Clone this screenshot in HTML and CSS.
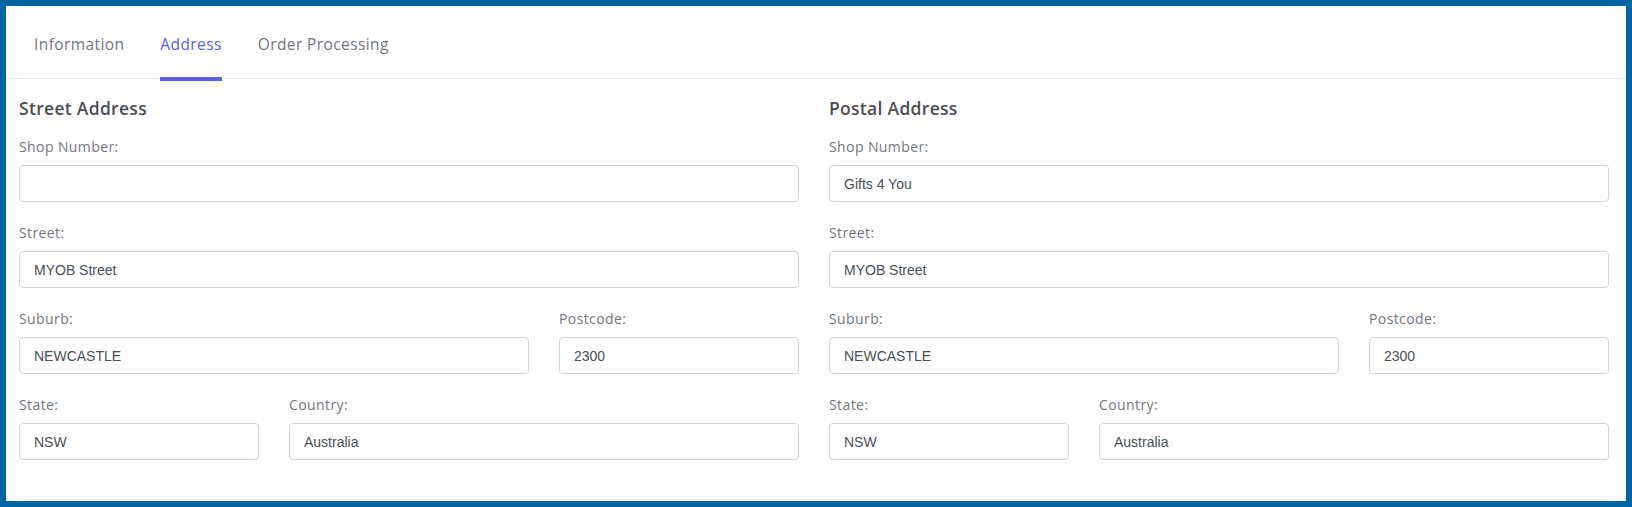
FILE: index.html
```html
<!DOCTYPE html>
<html lang="en">
<head>
<meta charset="utf-8">
<title>Address</title>
<link rel="stylesheet" href="styles.css">
</head>
<body>
<div class="frame">
  <nav class="tabs">
    <a class="tab">Information</a>
    <a class="tab active">Address</a>
    <a class="tab">Order Processing</a>
  </nav>
  <div class="columns">
    <section class="address">
      <h2 class="title">Street Address</h2>
      <div class="field">
        <label class="label">Shop Number:</label>
        <input class="input" type="text" value="">
      </div>
      <div class="field">
        <label class="label">Street:</label>
        <input class="input" type="text" value="MYOB Street">
      </div>
      <div class="row row-wide-narrow">
        <div class="field">
          <label class="label">Suburb:</label>
          <input class="input" type="text" value="NEWCASTLE">
        </div>
        <div class="field">
          <label class="label">Postcode:</label>
          <input class="input" type="text" value="2300">
        </div>
      </div>
      <div class="row row-narrow-wide">
        <div class="field">
          <label class="label">State:</label>
          <input class="input" type="text" value="NSW">
        </div>
        <div class="field">
          <label class="label">Country:</label>
          <input class="input" type="text" value="Australia">
        </div>
      </div>
    </section>
    <section class="address">
      <h2 class="title">Postal Address</h2>
      <div class="field">
        <label class="label">Shop Number:</label>
        <input class="input" type="text" value="Gifts 4 You">
      </div>
      <div class="field">
        <label class="label">Street:</label>
        <input class="input" type="text" value="MYOB Street">
      </div>
      <div class="row row-wide-narrow">
        <div class="field">
          <label class="label">Suburb:</label>
          <input class="input" type="text" value="NEWCASTLE">
        </div>
        <div class="field">
          <label class="label">Postcode:</label>
          <input class="input" type="text" value="2300">
        </div>
      </div>
      <div class="row row-narrow-wide">
        <div class="field">
          <label class="label">State:</label>
          <input class="input" type="text" value="NSW">
        </div>
        <div class="field">
          <label class="label">Country:</label>
          <input class="input" type="text" value="Australia">
        </div>
      </div>
    </section>
  </div>
</div>
</body>
</html>
```

FILE: styles.css
```css
* { box-sizing: border-box; }

html, body {
  margin: 0;
  padding: 0;
  background: #ffffff;
}

body {
  font-family: "Open Sans", "Noto Sans", sans-serif;
}

.frame {
  width: 1632px;
  height: 507px;
  border: 6px solid #0064a0;
  background: #ffffff;
  overflow: hidden;
}

.tabs {
  display: flex;
  height: 73px;
  padding-left: 28px;
  border-bottom: 1px solid #ebebf1;
}

.tab {
  position: relative;
  display: flex;
  align-items: center;
  height: 72px;
  padding-top: 4px;
  margin-right: 36px;
  font-size: 15.5px;
  letter-spacing: 0.4px;
  color: #74747e;
  cursor: pointer;
}

.tab.active {
  color: #5b60dc;
}

.tab.active::after {
  content: "";
  position: absolute;
  left: 0;
  right: 0;
  bottom: -3px;
  height: 4px;
  background: #5b60dc;
}

.columns {
  display: grid;
  grid-template-columns: 1fr 1fr;
  column-gap: 30px;
  padding: 0 17px 0 13px;
}

.title {
  margin: 17px 0 17px;
  height: 24px;
  font-size: 17.5px;
  line-height: 24px;
  font-weight: 600;
  letter-spacing: 0.3px;
  color: #4d4d55;
}

.field {
  display: flex;
  flex-direction: column;
  margin-bottom: 21px;
}

.label {
  height: 20px;
  margin-bottom: 8px;
  font-size: 14px;
  line-height: 20px;
  font-weight: 400;
  letter-spacing: 0.4px;
  color: #75757e;
}

.input {
  width: 100%;
  height: 37px;
  padding: 0 14px;
  border: 1px solid #ced4da;
  border-radius: 4px;
  background: #ffffff;
  font-family: "Liberation Sans", Arial, sans-serif;
  font-size: 14px;
  color: #495057;
  outline: none;
}

.row {
  display: grid;
  column-gap: 30px;
}

.row-wide-narrow {
  grid-template-columns: 1fr 240px;
}

.row-narrow-wide {
  grid-template-columns: 240px 1fr;
}
```
